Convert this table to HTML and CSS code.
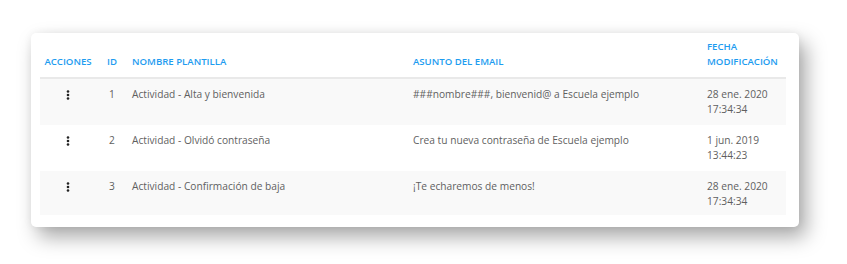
FILE: index.html
```html
<!DOCTYPE html>
<html lang="es">
<head>
<meta charset="utf-8">
<link rel="stylesheet" href="styles.css">
</head>
<body>
<div class="page">
  <div class="card">
    <table class="grid">
      <colgroup>
        <col class="c-acc"><col class="c-id"><col class="c-name"><col class="c-subj"><col class="c-date">
      </colgroup>
      <thead>
        <tr>
          <th class="acc">ACCIONES</th>
          <th class="id">ID</th>
          <th>NOMBRE PLANTILLA</th>
          <th>ASUNTO DEL EMAIL</th>
          <th>FECHA MODIFICACIÓN</th>
        </tr>
      </thead>
      <tbody>
        <tr>
          <td class="acc"><svg class="kebab" width="4" height="10" viewBox="0 0 4 10"><circle cx="2" cy="1.5" r="1.3"/><circle cx="2" cy="5" r="1.3"/><circle cx="2" cy="8.5" r="1.3"/></svg></td>
          <td class="id">1</td>
          <td>Actividad - Alta y bienvenida</td>
          <td>###nombre###, bienvenid@ a Escuela ejemplo</td>
          <td>28 ene. 2020 17:34:34</td>
        </tr>
        <tr>
          <td class="acc"><svg class="kebab" width="4" height="10" viewBox="0 0 4 10"><circle cx="2" cy="1.5" r="1.3"/><circle cx="2" cy="5" r="1.3"/><circle cx="2" cy="8.5" r="1.3"/></svg></td>
          <td class="id">2</td>
          <td>Actividad - Olvidó contraseña</td>
          <td>Crea tu nueva contraseña de Escuela ejemplo</td>
          <td>1 jun. 2019 13:44:23</td>
        </tr>
        <tr>
          <td class="acc"><svg class="kebab" width="4" height="10" viewBox="0 0 4 10"><circle cx="2" cy="1.5" r="1.3"/><circle cx="2" cy="5" r="1.3"/><circle cx="2" cy="8.5" r="1.3"/></svg></td>
          <td class="id">3</td>
          <td>Actividad - Confirmación de baja</td>
          <td>¡Te echaremos de menos!</td>
          <td>28 ene. 2020 17:34:34</td>
        </tr>
      </tbody>
    </table>
  </div>
</div>
</body>
</html>
```
FILE: styles.css
```css
html, body {
  margin: 0;
  padding: 0;
  background: #ffffff;
}
.page {
  padding: 33px 0 40px 31px;
}
.card {
  width: 768px;
  box-sizing: border-box;
  background: #ffffff;
  border-radius: 5px;
  padding: 0 13px 12px 9px;
  box-shadow: 7px 10px 20px rgba(0, 0, 0, 0.34), 0 0 8px rgba(0, 0, 0, 0.06);
}
.grid {
  width: 746px;
  border-collapse: collapse;
  table-layout: fixed;
  font-family: "Open Sans", "Noto Sans", sans-serif;
  font-size: 10.2px;
  line-height: 15px;
  color: #5f5f5f;
}
.c-acc { width: 56px; }
.c-id { width: 32px; }
.c-name { width: 281px; }
.c-subj { width: 294px; }
.c-date { width: 83px; }
.grid th {
  text-align: left;
  vertical-align: bottom;
  font-weight: 600;
  font-size: 9.6px;
  line-height: 15px;
  color: #1e9cf0;
  padding: 6px 4px 8px 4px;
  border-bottom: 2px solid #e9e9e9;
}
.grid td {
  vertical-align: top;
  padding: 8px 4px 8px 4px;
  height: 30px;
}
.grid tbody tr:last-child td {
  padding-bottom: 6px;
}
.grid tbody tr:nth-child(odd) {
  background: #f9f9f9;
}
.grid tbody tr:nth-child(even) {
  background: #ffffff;
}
.grid .acc {
  text-align: center;
  white-space: nowrap;
}
.grid .id {
  text-align: center;
}
.kebab {
  display: inline-block;
  margin-top: 3px;
  fill: #222222;
}
```
